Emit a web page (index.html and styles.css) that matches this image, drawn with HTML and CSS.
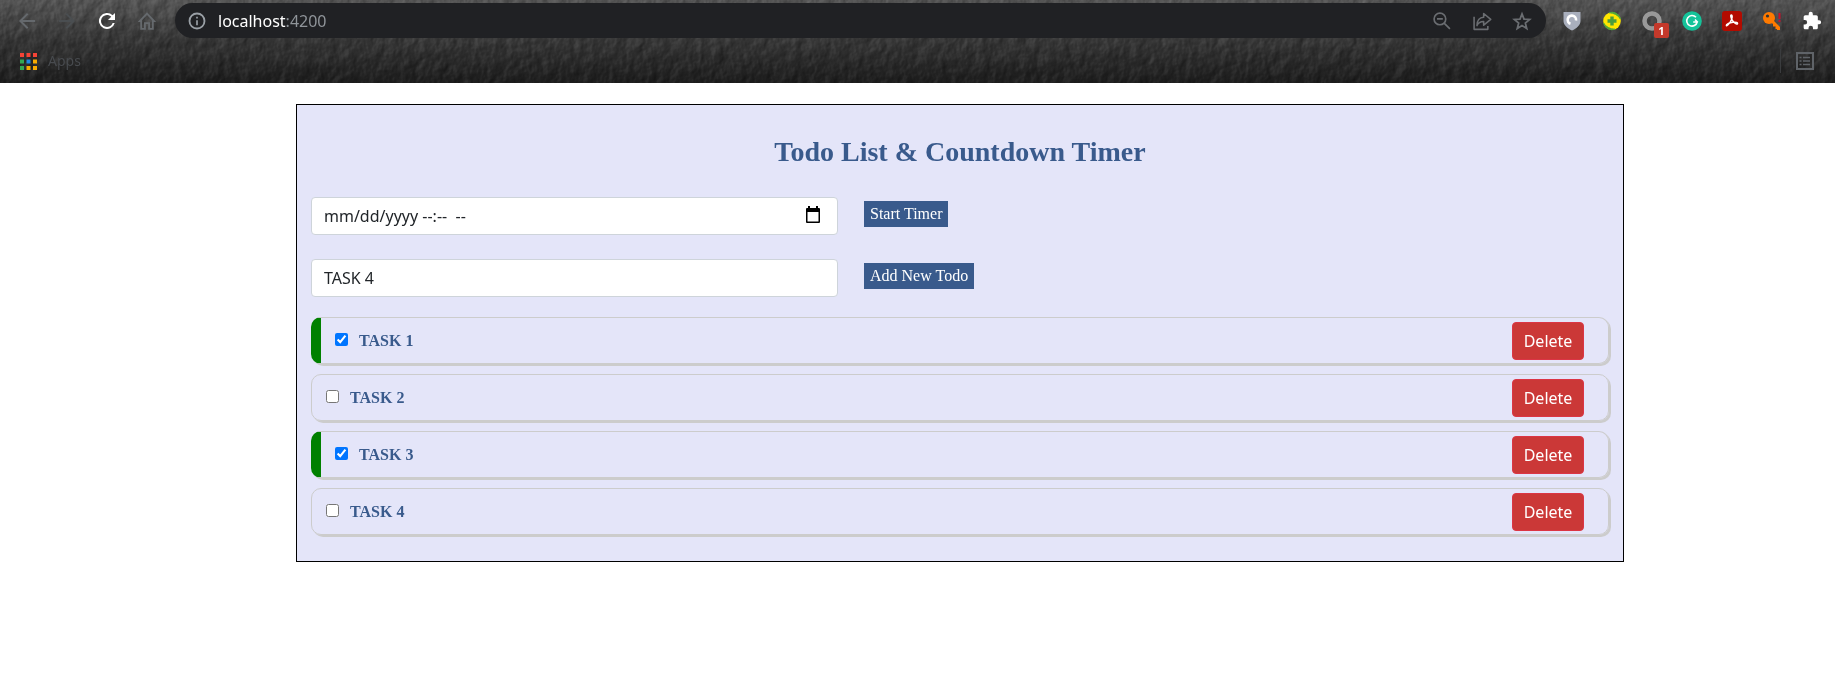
FILE: index.html
```html
<!DOCTYPE html>
<html lang="en">
<head>
<meta charset="utf-8">
<title>Todo List &amp; Countdown Timer</title>
<link rel="stylesheet" href="styles.css">
</head>
<body>
<header class="browser">
  <svg class="texture" aria-hidden="true">
    <filter id="stone" x="0" y="0" width="100%" height="100%" color-interpolation-filters="sRGB">
      <feTurbulence type="fractalNoise" baseFrequency="0.09 0.07" numOctaves="6" seed="8" result="n"/>
      <feDiffuseLighting in="n" surfaceScale="1.700" diffuseConstant="1" lighting-color="#fff">
        <feDistantLight azimuth="215" elevation="30"/>
      </feDiffuseLighting>
    </filter>
    <rect width="100%" height="100%" filter="url(#stone)"/>
  </svg>
  <div class="toolbar">
    <nav class="nav" aria-label="Browser">
      <button class="icon-btn" aria-label="Back"><svg class="i24 dim" viewBox="0 0 24 24"><path d="M20 11H7.800l5.600-5.600L12 4l-8 8 8 8 1.400-1.400L7.800 13H20z" fill="currentColor"/></svg></button>
      <button class="icon-btn" aria-label="Forward"><svg class="i24 faint" viewBox="0 0 24 24"><path d="M4 11h12.200l-5.600-5.600L12 4l8 8-8 8-1.400-1.400 5.600-5.600H4z" fill="currentColor"/></svg></button>
      <button class="icon-btn" aria-label="Reload"><svg class="i24" viewBox="0 0 24 24"><path d="M17.650 6.350A8 8 0 1 0 19.730 14h-2.080A6 6 0 1 1 12 6c1.660 0 3.140.690 4.220 1.780L13 11h7V4z" fill="currentColor"/></svg></button>
      <button class="icon-btn" aria-label="Home"><svg class="i20 dim" viewBox="0 0 24 24"><path d="M3.500 12 12 3l8.500 9H19V21.500H14.500V14.500H9.500V21.500H5V12z" fill="none" stroke="currentColor" stroke-width="2.200"/></svg></button>
    </nav>
    <div class="address">
      <svg class="i20 info" viewBox="0 0 24 24"><circle cx="12" cy="12" r="9" fill="none" stroke="currentColor" stroke-width="2.200"/><path d="M11 11h2v6h-2zM11 7h2v2h-2z" fill="currentColor"/></svg>
      <span class="url">localhost<span class="port">:4200</span></span>
      <button class="icon-btn addr-btn" aria-label="Zoom"><svg class="i20" viewBox="0 0 24 24"><g fill="none" stroke="currentColor" stroke-width="2"><circle cx="9.500" cy="9.500" r="7"/><path d="M14.500 14.500 21.500 21.500M6 9.500h7"/></g></svg></button>
      <button class="icon-btn addr-btn" aria-label="Share"><svg class="i20" viewBox="0 0 24 24"><path d="M2.500 7v15h16.500v-4M14 7.500V3l8.500 7-8.500 7v-4.500c-4.500 0-6.500 1-8 5 0-6 3-10 8-10z" fill="none" stroke="currentColor" stroke-width="1.900" stroke-linejoin="round"/></svg></button>
      <button class="icon-btn addr-btn" aria-label="Bookmark"><svg class="i20" viewBox="0 0 24 24"><path d="m12 3.500 2.400 6.200 6.800.5-5.200 4.300 1.700 6.500L12 17.400l-5.700 3.600L8 14.500l-5.200-4.300 6.800-.5z" fill="none" stroke="currentColor" stroke-width="2.100"/></svg></button>
    </div>
    <div class="extensions">
      <svg class="i20" viewBox="0 0 20 20"><path d="M1.500 1h17v9c0 4-4 7.500-8.500 9.500C5.500 17.500 1.500 14 1.500 10z" fill="#a9afbd"/><path d="M8.500 12.800A4.200 4.200 0 1 1 14 9.500" fill="none" stroke="#fff" stroke-width="2.600"/></svg>
      <svg class="i20" viewBox="0 0 20 20"><circle cx="10" cy="10" r="8.800" fill="#ffe600"/><path d="M7 1.700A8.800 8.800 0 0 1 18.500 8C16 4 12 2 7 1.700zM13 18.300A8.800 8.800 0 0 1 1.500 12c2.500 4 6.500 6 11.500 6.300z" fill="#4fa53c" stroke="#4fa53c"/><path d="M10 5.500v9M5.500 10h9" stroke="#4a9c3c" stroke-width="3.400"/></svg>
      <span class="ext-badged"><svg class="i20" viewBox="0 0 20 20"><circle cx="10" cy="10" r="7.500" fill="none" stroke="#999" stroke-width="4.500"/></svg><span class="badge">1</span></span>
      <svg class="i20" viewBox="0 0 20 20"><circle cx="10" cy="10" r="9.800" fill="#15c39a"/><path d="M14 6.300A5.300 5.300 0 1 0 15.200 11h-4M13 8.500 15.300 11 14 13.500" fill="none" stroke="#fff" stroke-width="1.600"/></svg>
      <svg class="i20" viewBox="0 0 20 20"><rect width="20" height="20" rx="3" fill="#b30b00"/><path d="M9.200 4c1.800 0 1 4-.7 6.500C7 13 5 15.500 4.300 14.500 3.800 13 8 11.500 11 11.200c3-.3 5 .3 4.500 1.500C14.500 14 10 10 9.200 7 8.700 5.500 8.500 4 9.200 4z" fill="none" stroke="#fff" stroke-width="1.400"/></svg>
      <svg class="i20" viewBox="0 0 20 20"><path d="M8 8l8.500 8.500V19" stroke="#ff7a00" stroke-width="3" fill="none"/><path d="M12 13v2.500M14.500 15.500V18" stroke="#ff7a00" stroke-width="2"/><circle cx="7" cy="7" r="6" fill="#ff7a00"/><circle cx="5.500" cy="5" r="1.600" fill="#333"/><path d="M17.500 2v6M17.500 9v2" stroke="#c8102e" stroke-width="2"/></svg>
      <svg class="i20" viewBox="0 0 24 24"><path d="M20.500 11H19V7a2 2 0 0 0-2-2h-4V3.500a2.500 2.500 0 0 0-5 0V5H4a2 2 0 0 0-2 2v3.800h1.500a2.700 2.700 0 0 1 0 5.400H2V20c0 1.100.9 2 2 2h3.800v-1.500a2.700 2.700 0 0 1 5.400 0V22H17a2 2 0 0 0 2-2v-4h1.500a2.500 2.500 0 0 0 0-5z" fill="#fff"/></svg>
    </div>
  </div>
  <div class="bookmarks">
    <a class="apps" href="#">
      <svg class="apps-icon" viewBox="0 0 17 17"><path d="M0 0h4v4H0zM6.500 0h4v4h-4zM13 0h4v4h-4z" fill="#f44336"/><path d="M0 6.500h4v4H0zM0 13h4v4H0z" fill="#34a853"/><path d="M6.500 6.500h4v4h-4z" fill="#1e88e5"/><path d="M13 6.500h4v4h-4zM6.500 13h4v4h-4zM13 13h4v4h-4z" fill="#f9ab00"/></svg>
      <span>Apps</span>
    </a>
    <div class="reading-area">
      <button class="icon-btn" aria-label="Reading list"><svg class="i20" viewBox="0 0 20 20"><path d="M2 2h16v16H2z" fill="none" stroke="currentColor" stroke-width="2"/><path d="M4.500 6.500h2M8 6.500h7M4.500 10h2M8 10h7M4.500 13.500h2M8 13.500h7" stroke="currentColor" stroke-width="1.500"/></svg></button>
    </div>
  </div>
</header>
<main class="page">
  <section class="card">
    <h1 class="title">Todo List &amp; Countdown Timer</h1>
    <form class="form-row">
      <div class="field">
        <input class="control" type="text" id="deadline" aria-label="Deadline" value="mm/dd/yyyy --:--  --">
        <svg class="calendar" viewBox="0 0 14 17"><path d="M2 0h2v2h6V0h2v2h1a1 1 0 0 1 1 1v13a1 1 0 0 1-1 1H1a1 1 0 0 1-1-1V3a1 1 0 0 1 1-1h1zM1.500 6v9.500h11V6z" fill-rule="evenodd"/></svg>
      </div>
      <button class="action" type="button">Start Timer</button>
    </form>
    <form class="form-row">
      <div class="field"><input class="control" type="text" id="todo" aria-label="New todo" value="TASK 4"></div>
      <button class="action" type="button">Add New Todo</button>
    </form>
    <ul class="todos">
      <li class="todo done"><label class="todo-label"><input class="check" type="checkbox" checked>TASK 1</label><button class="delete" type="button">Delete</button></li>
      <li class="todo"><label class="todo-label"><input class="check" type="checkbox">TASK 2</label><button class="delete" type="button">Delete</button></li>
      <li class="todo done"><label class="todo-label"><input class="check" type="checkbox" checked>TASK 3</label><button class="delete" type="button">Delete</button></li>
      <li class="todo"><label class="todo-label"><input class="check" type="checkbox">TASK 4</label><button class="delete" type="button">Delete</button></li>
    </ul>
  </section>
</main>
</body>
</html>
```
FILE: styles.css
```css
* { box-sizing: border-box; }
body { margin: 0; background: #fff; font-family: "Noto Sans", "Open Sans", sans-serif; font-size: 16px; }
button { font: inherit; cursor: pointer; }
svg { display: block; flex: none; }

.browser { position: relative; background: linear-gradient(#545454, #383838 45%, #1d1d1d); padding-bottom: 11px; color: #fff; }
.texture { position: absolute; inset: 0; width: 100%; height: 100%; mix-blend-mode: soft-light; opacity: 0.5; }
.toolbar { position: relative; display: flex; align-items: center; padding: 3px 13px 0 15px; }
.nav { display: flex; gap: 16px; width: 160px; }
.icon-btn { display: flex; align-items: center; justify-content: center; width: 24px; height: 24px; padding: 0; border: 0; background: none; color: inherit; }
.i24 { width: 24px; height: 24px; }
.i20 { width: 20px; height: 20px; }
.dim { color: #65696d; }
.faint { color: #4a4e51; }
.address { display: flex; flex: 1; align-items: center; height: 35px; padding: 0 12px; border-radius: 18px; background: #202124; }
.info { color: #9aa0a6; }
.url { flex: 1; margin-left: 11px; font-size: 16px; line-height: 24px; }
.port { color: #8f9499; }
.addr-btn { margin-left: 16px; color: #6a6d71; }
.extensions { display: flex; align-items: center; gap: 20px; margin-left: 16px; }
.ext-badged { position: relative; }
.badge { position: absolute; left: 12px; top: 12px; width: 15px; height: 15px; border-radius: 2px; background: #c5392b; font: bold 11px/15px "Open Sans", sans-serif; text-align: center; }
.bookmarks { position: relative; display: flex; align-items: center; justify-content: space-between; height: 34px; padding: 12px 18px 0 20px; }
.apps { display: flex; align-items: center; gap: 11px; color: #484b4f; text-decoration: none; font-size: 14px; line-height: 20px; }
.apps-icon { width: 17px; height: 17px; }
.reading-area { padding-left: 12px; border-left: 1px solid #3a3c3e; color: #5f6368; }

.page { padding: 21px 211px 40px 296px; }
.card { padding: 30px 14px 26px 14px; border: 1px solid #000; background: #e4e5f9; }
.title { margin: 0 0 28px; color: #395a8c; font: bold 28px/34px "Liberation Serif", serif; text-align: center; }
.form-row { display: flex; align-items: flex-start; gap: 26px; margin: 0 0 24px; }
.form-row:last-of-type { margin-bottom: 20px; }
.field { position: relative; width: 527px; }
.control { display: block; width: 100%; height: 38px; padding: 6px 12px; border: 1px solid #ced4da; border-radius: 4px; background: #fff; color: #212529; font: 16px/24px "Noto Sans", sans-serif; white-space: pre; }
.calendar { position: absolute; right: 18px; top: 9px; width: 14px; height: 17px; }
.action { height: 26px; margin-top: 4px; padding: 0 6px; border: 0; background: #395a8c; color: #fff; font: 16px/24px "Liberation Serif", serif; }
.todos { display: grid; gap: 10px; margin: 0; padding: 0; list-style: none; }
.todo { display: flex; align-items: center; justify-content: space-between; height: 47px; padding: 0 24px 0 14px; border: 1px solid #ccc; border-radius: 10px; box-shadow: 2px 2px 0 #ccc; }
.done { border-left: 10px solid green; }
.todo-label { display: flex; align-items: center; gap: 11px; color: #395a8c; font: bold 16px/24px "Liberation Serif", serif; }
.check { width: 13px; height: 13px; margin: 0 0 2px; }
.delete { width: 72px; height: 38px; padding: 0; border: 1px solid #dc3545; border-radius: 4px; background: #cb3837; color: #fff; line-height: 24px; }
```
